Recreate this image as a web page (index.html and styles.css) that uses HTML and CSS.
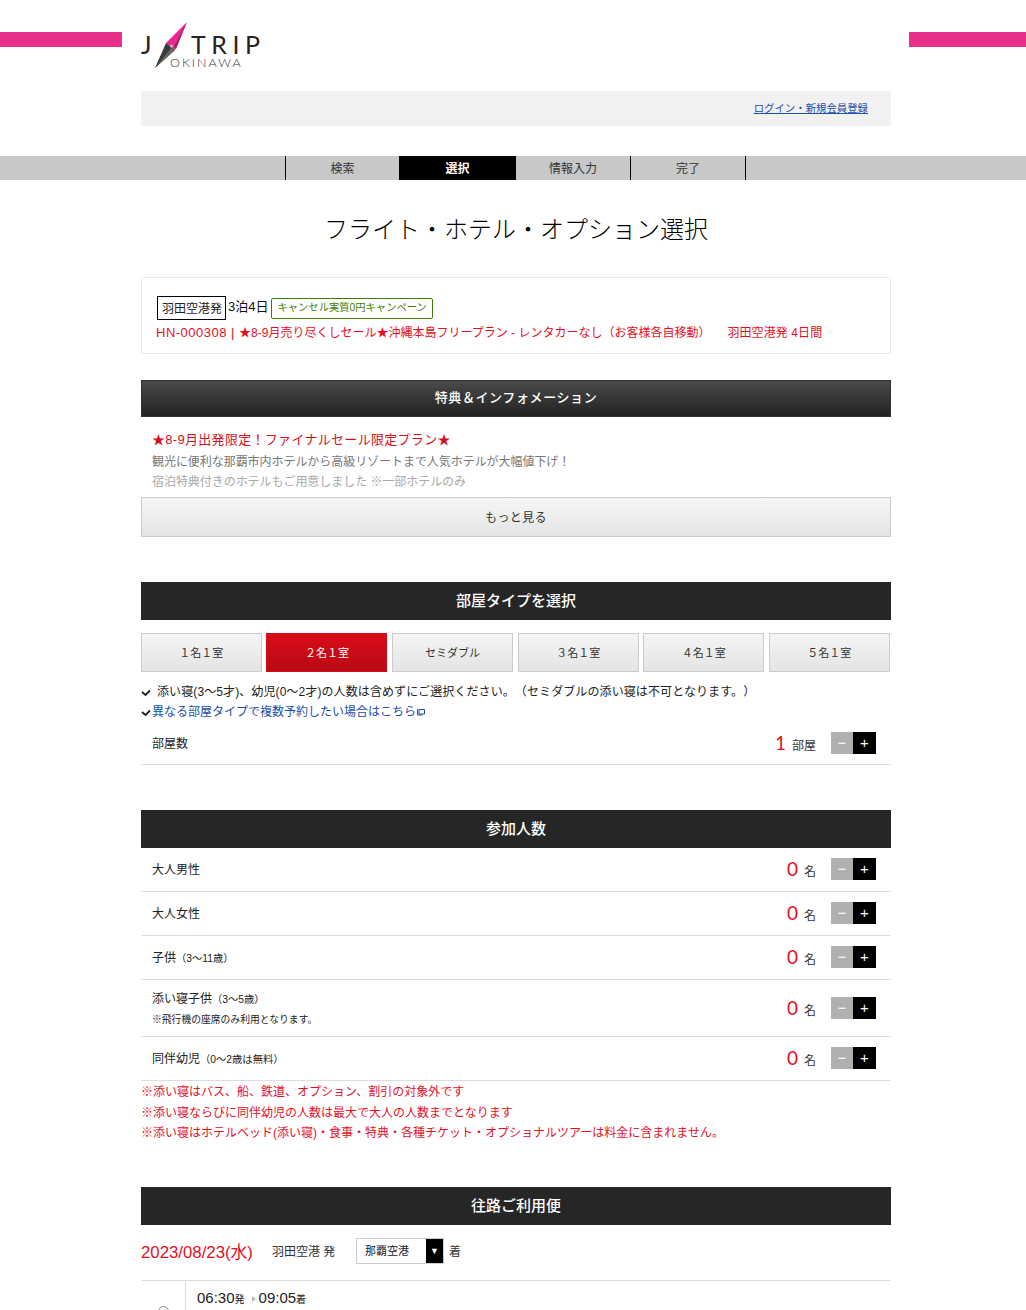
FILE: index.html
```html
<!DOCTYPE html>
<html lang="ja">
<head>
<meta charset="utf-8">
<title>フライト・ホテル・オプション選択</title>
<link rel="stylesheet" href="styles.css">
</head>
<body>
<div class="page">
  <div class="pink pink-left"></div>
  <div class="pink pink-right"></div>
  <div class="wrap">
    <header class="logo-row">
      <div class="logo">
        <svg class="needle" width="33" height="47" viewBox="0 0 33 47">
          <path d="M32 0 L11 21 L20 28 Z" fill="#e6298a"/>
          <path d="M32 0 L19 25 L21 27 Z" fill="#a81b5c"/>
          <path d="M0 46 L11 21 L20 28 Z" fill="#3a3a3a"/>
          <path d="M0 46 L17 25 L20 28 Z" fill="#666"/>
          <circle cx="16.500" cy="24" r="1.500" fill="#bbb"/>
        </svg>
        <span class="logo-j">J</span>
        <span class="logo-trip">TRIP</span>
        <span class="logo-sub">OKINAWA</span>
      </div>
    </header>
    <div class="login-bar"><a href="#">ログイン・新規会員登録</a></div>
  </div>

  <nav class="steps">
    <div class="steps-inner">
      <div class="step s1">検索</div>
      <div class="step s2 on">選択</div>
      <div class="step s3">情報入力</div>
      <div class="step s4">完了</div>
    </div>
  </nav>

  <div class="wrap">
    <h1 class="title">フライト・ホテル・オプション選択</h1>

    <section class="plan">
      <div class="plan-top"><span class="dep">羽田空港発</span><span class="nights">3泊4日</span><span class="camp">キャンセル実質0円キャンペーン</span></div>
      <p class="plan-name"><span class="code">HN-000308 | </span>★8-9月売り尽くしセール★沖縄本島フリープラン - レンタカーなし（お客様各自移動）<span class="plan-from">羽田空港発 4日間</span></p>
    </section>

    <h2 class="info-head">特典＆インフォメーション</h2>
    <section class="info">
      <p class="info-lead">★8-9月出発限定！ファイナルセール限定プラン★</p>
      <p class="info-text">観光に便利な那覇市内ホテルから高級リゾートまで人気ホテルが大幅値下げ！</p>
      <p class="info-text fade">宿泊特典付きのホテルもご用意しました ※一部ホテルのみ</p>
      <button class="more">もっと見る</button>
    </section>

    <h2 class="head room-head">部屋タイプを選択</h2>
    <div class="tabs">
      <div class="tab">１名１室</div>
      <div class="tab on">２名１室</div>
      <div class="tab">セミダブル</div>
      <div class="tab">３名１室</div>
      <div class="tab">４名１室</div>
      <div class="tab">５名１室</div>
    </div>
    <p class="note"><svg class="check" width="10" height="8" viewBox="0 0 10 8"><path d="M1 3l3.500 3L9 1.500" fill="none" stroke="#222" stroke-width="1.800"/></svg><span class="note-a">添い寝(3〜5才)、幼児(0〜2才)の人数は含めずにご選択ください。（セミダブルの添い寝は不可となります。）</span></p>
    <p class="note note2"><svg class="check" width="10" height="8" viewBox="0 0 10 8"><path d="M1 3l3.500 3L9 1.500" fill="none" stroke="#222" stroke-width="1.800"/></svg><a href="#">異なる部屋タイプで複数予約したい場合はこちら<svg class="ext" width="8" height="8" viewBox="0 0 8 8"><path d="M2 1.500h5.500v4.500H2z M.5 1v6h5" fill="none" stroke="#1b4fa8"/></svg></a></p>
    <div class="row room-row">
      <div class="label">部屋数</div>
      <div class="count"><b>1</b><span class="unit">部屋</span></div>
      <div class="stepper"><span class="minus">−</span><span class="plus">+</span></div>
    </div>

    <h2 class="head people-head">参加人数</h2>
    <div class="row"><div class="label">大人男性</div><div class="count"><b>0</b><span class="unit">名</span></div><div class="stepper"><span class="minus">−</span><span class="plus">+</span></div></div>
    <div class="row"><div class="label">大人女性</div><div class="count"><b>0</b><span class="unit">名</span></div><div class="stepper"><span class="minus">−</span><span class="plus">+</span></div></div>
    <div class="row"><div class="label label-s">子供<small>（3〜11歳）</small></div><div class="count"><b>0</b><span class="unit">名</span></div><div class="stepper"><span class="minus">−</span><span class="plus">+</span></div></div>
    <div class="row tall"><div class="label label-s">添い寝子供<small>（3〜5歳）</small><span class="sub">※飛行機の座席のみ利用となります。</span></div><div class="count"><b>0</b><span class="unit">名</span></div><div class="stepper"><span class="minus">−</span><span class="plus">+</span></div></div>
    <div class="row"><div class="label label-s">同伴幼児<small>（0〜2歳は無料）</small></div><div class="count"><b>0</b><span class="unit">名</span></div><div class="stepper"><span class="minus">−</span><span class="plus">+</span></div></div>
    <div class="warn">
      <p>※添い寝はバス、船、鉄道、オプション、割引の対象外です</p>
      <p>※添い寝ならびに同伴幼児の人数は最大で大人の人数までとなります</p>
      <p>※添い寝はホテルベッド(添い寝)・食事・特典・各種チケット・オプショナルツアーは料金に含まれません。</p>
    </div>

    <h2 class="head flight-head">往路ご利用便</h2>
    <div class="route">
      <span class="date">2023/08/23(水)</span>
      <span class="from">羽田空港 発</span>
      <span class="select"><span class="select-text">那覇空港</span><span class="select-arrow">▼</span></span>
      <span class="to">着</span>
    </div>
    <div class="flight">
      <div class="radio-cell"><span class="radio"></span></div>
      <div class="flight-info"><span class="time">06:30</span><small>発</small><i class="tri"></i><span class="time">09:05</span><small>着</small></div>
    </div>
  </div>
</div>
</body>
</html>
```
FILE: styles.css
```css
* { box-sizing: border-box; }
html, body { margin: 0; padding: 0; }
body {
  background: #fff;
  color: #222;
  font-family: "Liberation Sans", "Noto Sans CJK JP", sans-serif;
  font-size: 12px;
  text-spacing-trim: space-all;
}
p, h1, h2 { margin: 0; font-weight: normal; }
a { color: #1b4fa8; }
.page { position: relative; height: 1310px; overflow: hidden; }
.wrap { width: 750px; margin-left: 141px; }
.pink { position: absolute; top: 32px; height: 15px; background: #e72e8a; }
.pink-left { left: 0; width: 122px; }
.pink-right { right: 0; width: 117px; }

.logo-row { height: 91px; }
.logo { position: relative; height: 91px; color: #2a2122; }
.needle { position: absolute; left: 14px; top: 22px; }
.logo-j { position: absolute; left: 0; top: 34px; font-size: 25px; line-height: 20px; font-family: "Lato", sans-serif; font-weight: 400; }
.logo-trip { position: absolute; left: 50px; top: 34px; font-size: 25px; line-height: 20px; letter-spacing: 5.500px; font-family: "Lato", sans-serif; font-weight: 400; }
.logo-sub { position: absolute; left: 29px; top: 57px; font-size: 12.500px; line-height: 12px; letter-spacing: 2px; font-family: "Lato", sans-serif; font-weight: 300; color: #333; }

.login-bar { height: 35px; background: #f1f1f1; text-align: right; padding: 11px 23px 0 0; font-size: 10.400px; line-height: 14px; }

.steps { margin-top: 30px; height: 24px; background: #c8c8c8; }
.steps-inner { display: flex; margin-left: 285px; height: 24px; width: 461px; border-right: 1px solid #000; }
.step { text-align: center; line-height: 26px; font-size: 12px; color: #333; border-left: 1px solid #000; }
.s1 { width: 114px; }
.s2 { width: 117px; }
.s3 { width: 114px; border-left: 0; }
.s4 { width: 115px; }
.step.on { background: #000; color: #fff; font-weight: bold; border-left: 0; }

.title { margin-top: 34px; text-align: center; font-size: 24px; line-height: 32px; color: #000; font-weight: 300; }

.plan { margin-top: 31px; height: 77px; border: 1px solid #e8e8e8; border-radius: 3px; padding: 18px 15px 0; }
.plan-top { display: flex; align-items: flex-start; height: 24px; }
.dep { border: 1px solid #000; width: 69px; height: 24px; line-height: 24px; padding-left: 4px; font-size: 12px; color: #222; white-space: nowrap; }
.nights { margin: 0 3px 0 2px; font-size: 13px; line-height: 22px; color: #111; }
.camp { margin-top: 2px; border: 1px solid #3f7d00; border-radius: 2px; height: 21px; line-height: 17px; padding: 0 5px; font-size: 10.300px; color: #3f7d00; white-space: nowrap; }
.plan-name { margin: 3px 0 0 -1px; font-size: 12px; line-height: 20px; color: #e60f1f; white-space: nowrap; }
.code { font-size: 13px; letter-spacing: .5px; }
.plan-from { margin-left: 17px; letter-spacing: .1px; }

.info-head { margin-top: 26px; height: 37px; line-height: 33px; text-align: center; color: #fff; font-size: 13px; letter-spacing: .6px; background: linear-gradient(#4a4a4a, #222); border: 1px solid #333; font-weight: 500; }
.info { padding-top: 12px; }
.info-lead { padding: 0 0 2px 11px; font-size: 13px; line-height: 21px; letter-spacing: .3px; color: #d40f1d; }
.info-text { padding-left: 11px; font-size: 12px; line-height: 20px; letter-spacing: -.05px; color: #777; }
.fade { color: #a8a8a8; }
.more { display: block; width: 100%; height: 40px; margin-top: 5px; padding: 0 0 2px; border: 1px solid #ccc; background: linear-gradient(#f6f6f6, #e4e4e4); font: inherit; color: #333; font-size: 12px; letter-spacing: .4px; }

.head { height: 38px; line-height: 37px; text-align: center; background: #262626; color: #fff; font-size: 15px; font-weight: 500; }
.room-head { margin-top: 45px; }
.people-head { margin-top: 45px; }
.flight-head { margin-top: 43px; }

.tabs { display: flex; gap: 4.600px; margin: 13px 0 0 -.15px; }
.tab { width: 121px; height: 39px; line-height: 38px; text-align: center; border: 1px solid #ccc; background: linear-gradient(#f5f5f5, #e4e4e4); color: #333; font-size: 11px; }
.tab.on { background: linear-gradient(#d90c19, #b80a14); border-color: #d40c18; color: #fff; }
.note { display: flex; align-items: center; height: 20px; margin-top: 10px; font-size: 12px; line-height: 20px; color: #222; white-space: nowrap; }
.note2 { margin-top: 0; }
.check { margin-right: 1px; flex: none; position: relative; top: 1px; }
.note-a { margin-left: 5px; letter-spacing: .1px; }
.note a { text-decoration: none; }
.ext { margin-left: 1px; }

.row { display: flex; align-items: center; height: 44px; border-bottom: 1px solid #ddd; padding: 0 15px 0 11px; }
.room-row { height: 42px; margin-top: 1px; }
.row.tall { height: 57px; }
.label { flex: 1; font-size: 12px; line-height: 20px; color: #222; }
.label-s { padding-top: 2px; }
.label small { font-size: 10.300px; }
.sub { display: block; font-size: 9.800px; line-height: 20px; }
.count { display: flex; align-items: baseline; margin: 0 15px 1px 0; }
.count b { font-weight: 400; font-size: 19px; line-height: 22px; color: #e60f1f; font-family: "Lato", sans-serif; }
.unit { margin-left: 6px; font-size: 12px; color: #333; }
.stepper { display: flex; width: 45px; height: 22px; margin-bottom: 1px; }
.minus, .plus { text-align: center; line-height: 21px; font-size: 15px; color: #fff; }
.minus { width: 22px; background: #b0b0b0; }
.plus { width: 23px; background: #000; }

.warn { padding-top: 1px; }
.warn p { font-size: 12px; line-height: 20.500px; color: #e60f1f; white-space: nowrap; }

.route { display: flex; align-items: center; height: 52px; }
.date { font-size: 16.800px; color: #e60f1f; width: 131px; white-space: nowrap; }
.from { width: 84px; font-size: 12px; color: #333; }
.select { display: flex; width: 88px; height: 26px; border: 1px solid #ccc; }
.select-text { flex: 1; padding-left: 8px; font-size: 11px; line-height: 25px; color: #222; }
.select-arrow { width: 17px; background: #000; color: #fff; text-align: center; font-size: 9px; line-height: 24px; }
.to { margin-left: 5px; font-size: 12px; color: #333; }

.flight { display: flex; margin-top: 3px; border-top: 1px solid #ddd; height: 60px; }
.radio-cell { width: 45px; border-right: 1px solid #ddd; padding: 25px 0 0 17px; }
.radio { display: block; width: 11px; height: 11px; border: 1px solid #888; border-radius: 50%; }
.flight-info { padding: 7px 0 0 11px; font-size: 14px; line-height: 20px; color: #222; }
.time { font-size: 15px; }
.flight-info small { font-size: 10px; }
.tri { display: inline-block; width: 0; height: 0; margin: 0 3px 1px 7px; border-left: 4px solid #bbb; border-top: 3px solid transparent; border-bottom: 3px solid transparent; }
```
